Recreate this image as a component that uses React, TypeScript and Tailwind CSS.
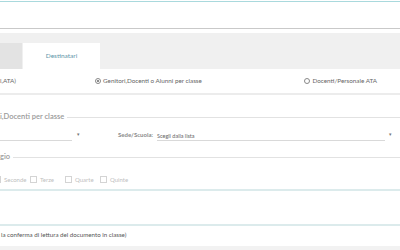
import React from "react";

const CheckItem = ({ label, partial, width }: { label: string; partial?: boolean; width: string }) => (
  <div className={`flex items-center gap-[3px] ${width}`}>
    <span
      className={`block h-[7px] border border-[#d4d4d4] bg-white ${partial ? "w-[1px] border-l-0" : "w-[7px]"}`}
    />
    <span>{label}</span>
  </div>
);

export default function App() {
  return (
    <div
      className="relative h-[250px] w-[400px] overflow-hidden bg-white"
      style={{ fontFamily: "Lato, 'Open Sans', sans-serif" }}
    >
      {/* Campo oggetto (in focus) */}
      <div className="pt-[1px]">
        <div className="h-[28px] border-t border-b border-t-[#a9d9dd] border-b-[#c9c9c9] bg-white" />
      </div>

      {/* Tabs */}
      <div className="mt-[4px] flex h-[36px] items-end bg-[#f0f0f0]">
        <div className="h-[26px] w-[22px] bg-[#e3e3e3]" />
        <div className="ml-[1px] flex h-[26px] w-[77px] items-center justify-center bg-white text-[6.5px] text-[#5e95a8]">
          Destinatari
        </div>
      </div>

      {/* Tipo destinatari */}
      <div className="flex h-[24px] items-center text-[6.3px] text-[#666]">
        <span className="w-[95px]">l,ATA)</span>
        <div className="flex items-center gap-[2px]">
          <span className="flex h-[6px] w-[6px] items-center justify-center rounded-full border border-[#888]">
            <span className="block h-[2px] w-[2px] rounded-full bg-[#666]" />
          </span>
          <span>Genitori,Docenti o Alunni per classe</span>
        </div>
        <div className="ml-auto mr-[23px] flex items-center gap-[2px]">
          <span className="block h-[6px] w-[6px] rounded-full border border-[#888]" />
          <span>Docenti/Personale ATA</span>
        </div>
      </div>
      <div className="h-[2px] bg-[#ececec]" />

      {/* Fieldset genitori/docenti */}
      <div className="mt-[17px] flex h-[10px] items-center gap-[3px]">
        <span className="text-[7.5px] font-semibold text-[#9a9a9a]">i,Docenti per classe</span>
        <div className="h-px flex-1 bg-[#e2e2e2]" />
      </div>
      <div className="flex h-[20px] items-end text-[6px]">
        <div className="flex w-[118px] items-center">
          <div className="h-[10px] w-[72px] border-b border-[#d9d9d9]" />
          <span className="ml-[5px] mb-[4px] text-[5px] text-[#777]">▾</span>
        </div>
        <span className="mb-[3px] font-bold text-[#8a8a8a]">Sede/Scuola:</span>
        <div className="ml-[4px] flex flex-1 items-center">
          <div className="flex h-[10px] w-[228px] items-center border-b border-[#d9d9d9] text-[5.5px] text-[#666]">
            Scegli dalla lista
          </div>
          <span className="ml-[4px] mb-[4px] text-[5px] text-[#777]">▾</span>
        </div>
      </div>

      {/* Fieldset classi */}
      <div className="mt-[10px] flex h-[10px] items-center gap-[3px]">
        <span className="text-[7.5px] font-semibold text-[#9a9a9a]">gio</span>
        <div className="h-px flex-1 bg-[#e2e2e2]" />
      </div>
      <div className="mt-[12px] flex h-[10px] items-center text-[6px] text-[#c0c0c0]">
        <CheckItem label="Seconde" partial width="w-[30px]" />
        <CheckItem label="Terze" width="w-[35px]" />
        <CheckItem label="Quarte" width="w-[35px]" />
        <CheckItem label="Quinte" width="w-[35px]" />
      </div>

      {/* Area vuota */}
      <div className="mt-[5px] h-[37px] border-t-2 border-b-2 border-[#dcebec]" />

      <div className="flex h-[17px] items-center pl-[1px] text-[6.2px] text-[#555]">
        la conferma di lettura del documento in classe)
      </div>
      <div className="mt-[3px] h-[4px] bg-[#f2f2f2]" />
    </div>
  );
}
